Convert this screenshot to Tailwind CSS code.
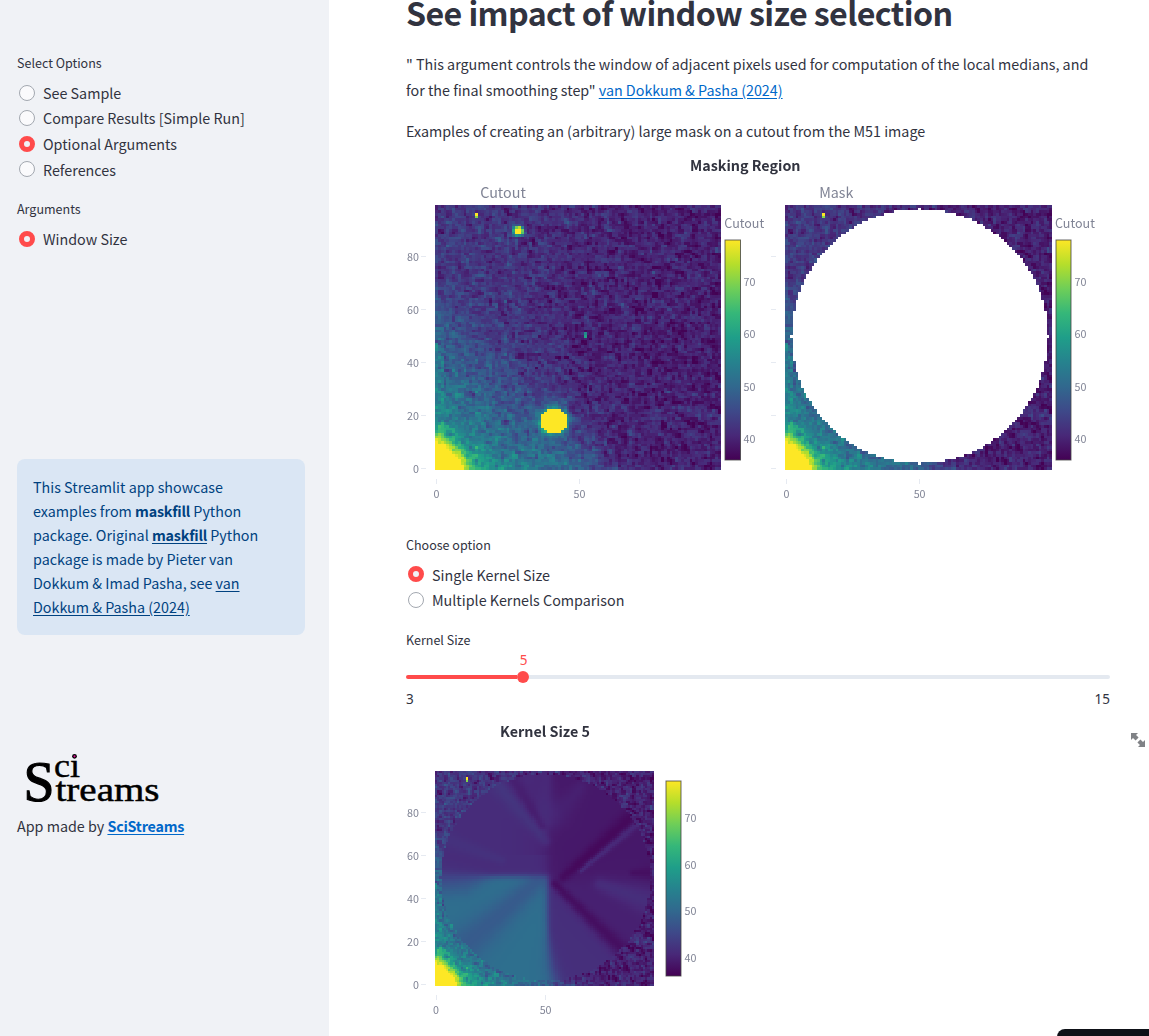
<!DOCTYPE html>
<html lang="en">
<head>
<meta charset="utf-8">
<title>maskfill examples</title>
<script src="https://cdn.jsdelivr.net/npm/@tailwindcss/browser@4"></script>
</head>
<body class="relative flex h-[1036px] w-[1149px] overflow-hidden bg-white font-['Noto_Sans_CJK_SC','Noto_Sans',sans-serif] text-[14.32px] text-[#31333f]">

<aside class="h-full w-[329px] shrink-0 bg-[#f0f2f6] pl-[17px] pt-[52px]">
  <div class="h-7 text-[12.53px] leading-[22px]">Select Options</div>
  <div class="flex flex-col">
    <label class="flex h-[25.6px] items-center gap-2 pl-0.5"><span class="size-4 rounded-full border border-[#a3a8b0] bg-[#fafafc]"></span><span class="leading-[25px]">See Sample</span></label>
    <label class="flex h-[25.6px] items-center gap-2 pl-0.5"><span class="size-4 rounded-full border border-[#a3a8b0] bg-[#fafafc]"></span><span class="-mt-px leading-[25px]">Compare Results [Simple Run]</span></label>
    <label class="flex h-[25.6px] items-center gap-2 pl-0.5"><span class="size-4 rounded-full border-[5px] border-[#ff4b4b] bg-[#f0f2f6]"></span><span class="leading-[25px]">Optional Arguments</span></label>
    <label class="flex h-[25.6px] items-center gap-2 pl-0.5"><span class="-mt-px size-4 rounded-full border border-[#a3a8b0] bg-[#fafafc]"></span><span class="leading-[25px]">References</span></label>
  </div>
  <div class="mt-[15.6px] h-7 text-[12.53px] leading-[22px]">Arguments</div>
  <label class="flex h-[25.6px] items-center gap-2 pl-0.5"><span class="size-4 rounded-full border-[5px] border-[#ff4b4b] bg-[#f0f2f6]"></span><span class="leading-[25px]">Window Size</span></label>

  <div class="mt-[207.4px] h-[176px] w-72 whitespace-nowrap rounded-lg bg-[#dae6f4] p-4 leading-6 text-[#004280]">
    This Streamlit app showcase<br>
    examples from <b class="font-bold tracking-[-0.2px]">maskfill</b> Python<br>
    package. Original <a class="font-bold tracking-[-0.2px] underline underline-offset-2">maskfill</a> Python<br>
    package is made by Pieter van<br>
    Dokkum &amp; Imad Pasha, see <a class="underline underline-offset-2">van<br>
    Dokkum &amp; Pasha (2024)</a>
  </div>

  <svg class="mt-[111px] block overflow-visible" width="160" height="64" viewBox="17 746 160 64" font-family="Liberation Serif, serif" fill="#000" stroke="#000">
    <text x="23.5" y="800.5" font-size="58" stroke-width="1.2" textLength="31" lengthAdjust="spacingAndGlyphs">S</text>
    <text x="54" y="777" font-size="33" stroke-width=".4" textLength="26" lengthAdjust="spacingAndGlyphs">cı</text>
    <circle cx="74.5" cy="756.3" r="2.4" stroke="none"/><circle cx="74.5" cy="756.3" r="1.1" fill="#e0109a" stroke="none"/>
    <text x="55.5" y="800.5" font-size="34" stroke-width=".5" textLength="104" lengthAdjust="spacingAndGlyphs">treams</text>
  </svg>
  <div class="mt-[3px] leading-[26px]">App made by <a class="font-bold tracking-[-0.22px] text-[#0068c9] underline underline-offset-2">SciStreams</a></div>
</aside>

<main class="flex h-full w-[820px] flex-col pl-[77px]">
  <h1 class="h-[51px] whitespace-nowrap text-[32.2px] font-bold leading-6 tracking-[-0.6px]">See impact of window size selection</h1>
  <p class="h-[67px] whitespace-nowrap leading-[25.6px]">" This argument controls the window of adjacent pixels used for computation of the local medians, and<br>for the final smoothing step" <a class="text-[#0068c9] underline underline-offset-2">van Dokkum &amp; Pasha (2024)</a></p>
  <p class="h-8 leading-[25.6px]">Examples of creating an (arbitrary) large mask on a cutout from the M51 image</p>

  <section class="grid h-[382px] w-[704px] shrink-0">
    <canvas id="cutout" width="100" height="100" class="col-start-1 row-start-1 ml-[29px] mt-[55px] h-[265px] w-[286px] [image-rendering:pixelated]"></canvas>
    <canvas id="mask" width="100" height="100" class="col-start-1 row-start-1 ml-[379px] mt-[55px] h-[265px] w-[266.5px] [image-rendering:pixelated]"></canvas>
    <svg class="col-start-1 row-start-1" width="704" height="382" viewBox="406 150 704 382" font-size="10.74" fill="#808495">
      <defs>
        <linearGradient id="viridis" x1="0" y1="1" x2="0" y2="0">
          <stop offset="0" stop-color="#440154"/><stop offset=".111" stop-color="#482878"/><stop offset=".222" stop-color="#3e4989"/><stop offset=".333" stop-color="#31688e"/><stop offset=".444" stop-color="#26828e"/><stop offset=".556" stop-color="#1f9e89"/><stop offset=".667" stop-color="#35b779"/><stop offset=".778" stop-color="#6ece58"/><stop offset=".889" stop-color="#b5de2b"/><stop offset="1" stop-color="#fde725"/>
        </linearGradient>
      </defs>
      <text x="745.3" y="171" font-size="14.32" font-weight="700" fill="#31333f" text-anchor="middle">Masking Region</text>
      <text x="503" y="198" font-size="14.32" text-anchor="middle">Cutout</text>
      <text x="836.3" y="198" font-size="14.32" text-anchor="middle">Mask</text>
      <text x="724.3" y="228" font-size="12.53">Cutout</text>
      <text x="1055" y="228" font-size="12.53">Cutout</text>
      <g text-anchor="end">
        <text x="419" y="261">80</text><text x="419" y="314">60</text><text x="419" y="367">40</text><text x="419" y="420">20</text><text x="419" y="473">0</text>
      </g>
      <g text-anchor="middle">
        <text x="436.4" y="498">0</text><text x="579.4" y="498">50</text><text x="786.4" y="498">0</text><text x="919.6" y="498">50</text>
      </g>
      <g>
        <text x="743.5" y="286">70</text><text x="743.5" y="338">60</text><text x="743.5" y="391">50</text><text x="743.5" y="443">40</text>
        <text x="1074.5" y="286">70</text><text x="1074.5" y="338">60</text><text x="1074.5" y="391">50</text><text x="1074.5" y="443">40</text>
      </g>
      <path stroke="#e6eaf1" fill="none" d="M421 256.5h5M421 309.5h5M421 362.5h5M421 415.5h5M421 468.5h5M771 256.5h5M771 309.5h5M771 362.5h5M771 415.5h5M771 468.5h5M436.5 479v5M579.5 479v5M786.5 479v5M919.5 479v5"/>
      <rect x="725" y="240" width="15.5" height="220" fill="url(#viridis)" stroke="#444" stroke-opacity=".8"/>
      <rect x="1056" y="240" width="15" height="220" fill="url(#viridis)" stroke="#444" stroke-opacity=".8"/>
    </svg>
  </section>

  <div class="h-[30px] shrink-0 pt-0.5 text-[12.53px] leading-[22px]">Choose option</div>
  <div class="flex shrink-0 flex-col">
    <label class="flex h-[25.6px] items-center gap-2 pl-0.5"><span class="-mt-px size-4 rounded-full border-[5px] border-[#ff4b4b] bg-[#f0f2f6]"></span><span class="-mt-px leading-[25px]">Single Kernel Size</span></label>
    <label class="flex h-[25.6px] items-center gap-2 pl-0.5"><span class="size-4 rounded-full border border-[#a3a8b0] bg-white"></span><span class="-mt-0.5 leading-[25px]">Multiple Kernels Comparison</span></label>
  </div>
  <div class="mt-[16.8px] h-[20px] shrink-0 text-[12.53px] leading-[20px]">Kernel Size</div>
  <div class="h-[21px] w-[235px] shrink-0 text-center font-['Noto_Sans',sans-serif] text-[13.5px] leading-[21px] text-[#ff4b4b]">5</div>
  <div class="flex h-3 w-[704px] shrink-0 items-center">
    <span class="h-1 w-[111px] rounded-l-full bg-[#ff4b4b]"></span><span class="size-3 rounded-full bg-[#ff4b4b]"></span><span class="h-1 grow rounded-r-full bg-[#e4e9f0]"></span>
  </div>
  <div class="flex w-[704px] shrink-0 justify-between pt-1.5 font-['Noto_Sans',sans-serif] text-[13.5px] leading-5"><span>3</span><span>15</span></div>

  <section class="grid h-[327px] w-[743px] shrink-0">
    <canvas id="filled" width="100" height="100" class="col-start-1 row-start-1 ml-[29px] mt-[62px] h-[215px] w-[219px] [image-rendering:pixelated]"></canvas>
    <svg class="col-start-1 row-start-1" width="743" height="327" viewBox="406 709 743 327" font-size="10.74" fill="#808495">
      <text x="545" y="737" font-size="14.32" font-weight="700" fill="#31333f" text-anchor="middle">Kernel Size 5</text>
      <g text-anchor="end">
        <text x="419" y="817">80</text><text x="419" y="860">60</text><text x="419" y="903">40</text><text x="419" y="946">20</text><text x="419" y="989">0</text>
      </g>
      <g text-anchor="middle"><text x="436" y="1014">0</text><text x="545.6" y="1014">50</text></g>
      <text x="684.5" y="822">70</text><text x="684.5" y="869">60</text><text x="684.5" y="915">50</text><text x="684.5" y="962">40</text>
      <path stroke="#e6eaf1" fill="none" d="M421 812.5h5M421 855.5h5M421 898.5h5M421 941.5h5M421 984.5h5M436.5 995v5M545.5 995v5"/>
      <rect x="666" y="781" width="15" height="195" fill="url(#viridis)" stroke="#444" stroke-opacity=".8"/>
      <path fill="#808286" d="M1131 733h7l-2 2 2.6 2.6-3 3-2.600-2.600-2 2zM1145 747h-7l2-2-2.600-2.600 3-3 2.600 2.600 2-2z"/>
    </svg>
  </section>
</main>

<div class="absolute left-[1057px] top-[1029px] h-4 w-32 rounded-tl-lg bg-[#0e1117]"></div>

<script>
const stops = [[68,1,84],[72,40,120],[62,73,137],[49,104,142],[38,130,142],[31,158,137],[53,183,121],[110,206,88],[181,222,43],[253,231,37]];
function color(v) {
  const t = Math.max(0, Math.min(.9999, (v - 36) / 42)) * 9, i = Math.floor(t), f = t - i;
  return stops[i].map((c, k) => c + (stops[i + 1][k] - c) * f);
}
let seed = 51;
function rnd() { seed = (seed * 1664525 + 1013904223) >>> 0; return seed / 4294967296; }
function gauss() { return Math.sqrt(-2 * Math.log(rnd() + 1e-9)) * Math.cos(6.28318 * rnd()); }

// detector noise, correlated between neighbouring pixels
const raw = Array.from({ length: 102 }, () => Array.from({ length: 102 }, gauss));
const noise = (x, y) => (raw[y + 1][x + 1] + .45 * (raw[y + 1][x] + raw[y][x + 1])) * 1.65;

const sky = [];
for (let y = 0; y < 100; y++) {
  sky.push([]);
  for (let x = 0; x < 100; x++) {
    const s = x / 58 + y / 62;
    let v = 39.6 + 3.3 * Math.exp(-Math.pow(x / 48, 2)) + 8.2 * Math.exp(-Math.pow(s, 4));
    v += 3.5 * Math.exp(-Math.pow((x - 44) / 12, 4) - Math.pow(y / 12, 2));
    v += 28 * Math.exp(-Math.pow(Math.hypot(x / 10, y / 9), 4)) + 15 * Math.exp(-Math.pow((x * .8 + y) / 19, 2));
    v += 12 * Math.exp(-Math.pow(x / 3.5, 2) - Math.pow((y - 10) / 4, 2));
    if (x < 3 && y > 20) v += 3.5 * Math.exp(-Math.pow((y - 38) / 12, 2));
    v += noise(x, y) * (v > 48 ? 1.3 : 1);
    const r = Math.hypot(x - 41, y - 18.2);
    v += 22 * Math.exp(-Math.pow(r / 5.4, 4)) + 4 * Math.exp(-Math.pow(r / 7.5, 2));
    if (r < 4.8) v = 80;
    const d = Math.hypot(x - 28.6, y - 89.8);
    v += 60 * Math.exp(-d * d / 2.3);
    sky[y].push(v);
  }
}
sky[96][14] = 80; sky[95][14] = 70; sky[50][52] = 60; sky[51][52] = 56;

const masked = (x, y) => (x - 50) ** 2 + (y - 50) ** 2 <= 48 * 48;
const sig = t => 1 / (1 + Math.exp(-t));
// x1, y1, x2, y2, width, amplitude
const streaks = [
  [58,50,92,80,4.5,-1.9],[66,53,93,76,2,2.8],[50,67,29,94,5,1.6],[48,74,34,96,4,-1.8],
  [54,47,86,15,4,-2.8],[46,48,14,19,9,-3.2],[51,99,51,76,5,1.1],[66,92,56,80,6,.9],
  [75,47,99,38,6,1.8],[90,52,99,52,3.5,-1.3],[30,58,4,68,4,.8]
];
function fill(x, y) {
  const soft = x < 25 ? .8 + (25 - x) * .06 : .8;
  const sw = sig((50.5 - y) / soft) * sig((50.6 + Math.pow(Math.max(0, 50 - y) / 50, 4) * 4 - x) / (.9 + Math.max(0, 25 - y) * .05));
  const east = sig((x - 50.5) / 1.5), south = sig((49.5 - y) / 2);
  let other = 41.2 - 2.4 * east * (1 - south);
  if (y > 60) other -= .9 * sig((x - 42) / 4) * (1 - east);
  const se = sig(((50 - y) - (x - 50)) / 3) * south;
  other += east * (-1.5 * south * (1 - se) + .4 * se);
  const teal = 51.2 - 4 * sig((y - 43 + Math.max(0, x - 14) * -.5) / 2) * sig((24 - x) / 4);
  let v = other + (teal - other) * sw;
  for (const [a, b, c, d, w, amp] of streaks) {
    const L2 = (c - a) ** 2 + (d - b) ** 2;
    const t = Math.max(0, Math.min(1, ((x - a) * (c - a) + (y - b) * (d - b)) / L2));
    const r = Math.hypot(x - a - t * (c - a), y - b - t * (d - b));
    v += amp * Math.exp(-Math.pow(r / (w * (.5 + .5 * t)), 2)) * (amp === -3.2 ? sw : 1);
  }
  return Math.max(36.8, v);
}
function draw(id, value) {
  const ctx = document.getElementById(id).getContext('2d'), img = ctx.createImageData(100, 100);
  for (let y = 0; y < 100; y++) for (let x = 0; x < 100; x++) {
    const v = value(x, y), k = ((99 - y) * 100 + x) * 4;
    if (v === null) continue;
    const c = color(v);
    img.data[k] = c[0]; img.data[k + 1] = c[1]; img.data[k + 2] = c[2]; img.data[k + 3] = 255;
  }
  ctx.putImageData(img, 0, 0);
}
draw('cutout', (x, y) => sky[y][x]);
draw('mask', (x, y) => masked(x, y) ? null : sky[y][x]);
draw('filled', (x, y) => masked(x, y) ? fill(x, y) : sky[y][x]);
</script>
</body>
</html>
